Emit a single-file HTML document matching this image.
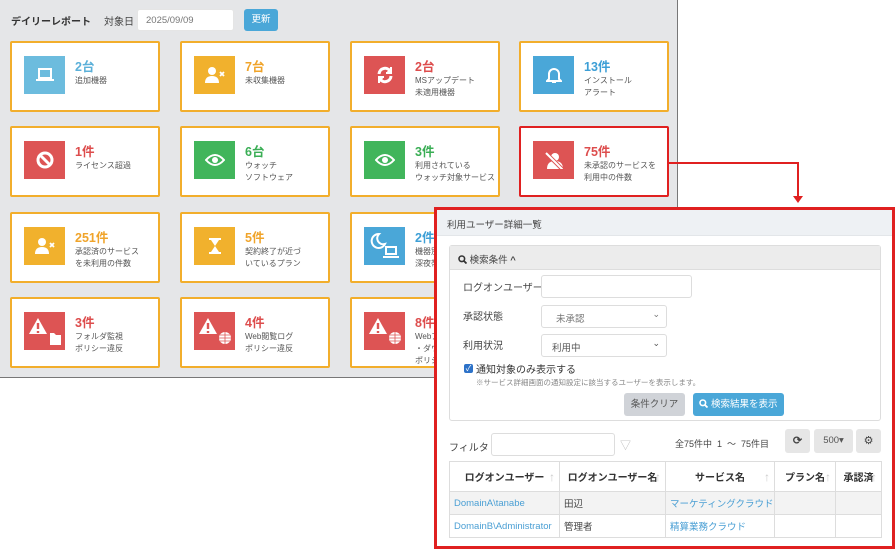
<!DOCTYPE html>
<html><head><meta charset="utf-8"><style>
*{box-sizing:border-box;margin:0;padding:0}
body{width:895px;height:549px;background:#fff;position:relative;overflow:hidden;font-family:"Liberation Sans","Noto Sans CJK JP",sans-serif;color:#444}
.a{position:absolute}
#dash{left:0;top:0;width:678px;height:378px;background:#e5e6e8;border-right:1px solid #777;border-bottom:1px solid #777}
.card{position:absolute;width:150px;height:71px;background:#fff;border:2px solid #f2ae2c;border-radius:2px}
.ic{position:absolute;left:12px;top:13px;width:41px;height:38px;display:flex;align-items:center;justify-content:center}
.num{position:absolute;left:63px;top:13px;font-size:12.5px;font-weight:bold}
.lb{position:absolute;left:63px;top:32px;font-size:8px;line-height:12px;color:#555}
.bl{background:#6cbcde}.or{background:#f1b12d}.rd{background:#dd5454}.gr{background:#41b55b}.db{background:#4aa7d8}
.cb{color:#5bb0d9}.co{color:#f0a42a}.cr{color:#dd4d4d}.cg{color:#3aae55}
.inp{border:1px solid #ccc;border-radius:3px;background:#fff}
th{font-size:10px;font-weight:bold;color:#333;border:1px solid #ddd;height:30px;text-align:center;position:relative}
td{font-size:9.5px;border:1px solid #ddd;height:23px;padding-left:4px}
.lk{color:#4a9fd4}
.arr{position:absolute;right:4px;top:8px;color:#ccc;font-weight:normal;font-size:12px}
</style></head><body>
<div id="dash" class="a">
<div class="a" style="left:11px;top:13px;font-size:10px;font-weight:bold;color:#333">デイリーレポート</div>
<div class="a" style="left:104px;top:13px;font-size:10px;color:#444">対象日</div>
<div class="a inp" style="left:137px;top:9px;width:97px;height:22px;border-color:#e5e5e5;font-size:9.5px;color:#777;padding:5px 8px">2025/09/09</div>
<div class="a" style="left:244px;top:9px;width:34px;height:22px;background:#4aa7d8;border-radius:3px;color:#fff;font-size:9.5px;text-align:center;line-height:22px">更新</div>

<div class="card" style="left:10px;top:41px"><div class="ic bl"><svg width="18" height="14"><rect x="3" y="1" width="12" height="9" fill="none" stroke="#fff" stroke-width="2"/><rect x="0" y="11" width="18" height="2" fill="#fff"/></svg></div><div class="num cb">2台</div><div class="lb">追加機器</div></div>
<div class="card" style="left:180px;top:41px"><div class="ic or"><svg width="22" height="16"><circle cx="8" cy="4" r="4" fill="#fff"/><path d="M1 16 Q1 9 8 9 Q15 9 15 16Z" fill="#fff"/><path d="M16 5l4 4M20 5l-4 4" stroke="#fff" stroke-width="1.8"/></svg></div><div class="num co">7台</div><div class="lb">未収集機器</div></div>
<div class="card" style="left:350px;top:41px"><div class="ic rd"><svg width="18" height="18" fill="none" stroke="#fff" stroke-width="3"><path d="M3 8 A6 6 0 0 1 14 5"/><path d="M15 10 A6 6 0 0 1 4 13"/><path d="M15 1v6h-5M3 17v-6h5" stroke-width="2" fill="#fff"/></svg></div><div class="num cr">2台</div><div class="lb">MSアップデート<br>未適用機器</div></div>
<div class="card" style="left:519px;top:41px"><div class="ic db"><svg width="16" height="18" fill="none" stroke="#fff" stroke-width="2"><path d="M3 13V8a5 5 0 0 1 10 0v5l2 2H1z"/><path d="M6 16h4"/></svg></div><div class="num cb" style="color:#3d9fd6">13件</div><div class="lb">インストール<br>アラート</div></div>

<div class="card" style="left:10px;top:126px"><div class="ic rd"><svg width="18" height="18" fill="none" stroke="#fff" stroke-width="3"><circle cx="9" cy="9" r="7"/><path d="M4 4l10 10"/></svg></div><div class="num cr">1件</div><div class="lb">ライセンス超過</div></div>
<div class="card" style="left:180px;top:126px"><div class="ic gr"><svg width="20" height="14"><path d="M1 7Q10 -3 19 7Q10 17 1 7Z" fill="none" stroke="#fff" stroke-width="2"/><circle cx="10" cy="7" r="3" fill="#fff"/></svg></div><div class="num cg">6台</div><div class="lb">ウォッチ<br>ソフトウェア</div></div>
<div class="card" style="left:350px;top:126px"><div class="ic gr"><svg width="20" height="14"><path d="M1 7Q10 -3 19 7Q10 17 1 7Z" fill="none" stroke="#fff" stroke-width="2"/><circle cx="10" cy="7" r="3" fill="#fff"/></svg></div><div class="num cg">3件</div><div class="lb">利用されている<br>ウォッチ対象サービス</div></div>
<div class="card" style="left:519px;top:126px;border-color:#e02020"><div class="ic rd"><svg width="20" height="18"><circle cx="11" cy="6" r="4" fill="#fff"/><path d="M3 18Q3 10 11 10Q19 10 19 18Z" fill="#fff"/><path d="M2 2l16 16" stroke="#dd5454" stroke-width="4"/><path d="M2 2l16 16" stroke="#fff" stroke-width="2"/></svg></div><div class="num cr">75件</div><div class="lb">未承認のサービスを<br>利用中の件数</div></div>

<div class="card" style="left:10px;top:212px"><div class="ic or"><svg width="22" height="16"><circle cx="8" cy="4" r="4" fill="#fff"/><path d="M1 16 Q1 9 8 9 Q15 9 15 16Z" fill="#fff"/><path d="M16 5l4 4M20 5l-4 4" stroke="#fff" stroke-width="1.8"/></svg></div><div class="num co">251件</div><div class="lb">承認済のサービス<br>を未利用の件数</div></div>
<div class="card" style="left:180px;top:212px"><div class="ic or"><svg width="14" height="16"><path d="M1 1h12M1 15h12" stroke="#fff" stroke-width="2"/><path d="M3 2h8L7 8l4 6H3l4-6z" fill="#fff"/></svg></div><div class="num co">5件</div><div class="lb">契約終了が近づ<br>いているプラン</div></div>
<div class="card" style="left:350px;top:212px"><div class="ic db" style="width:41px;height:38px"><svg width="30" height="28" fill="none" stroke="#fff" stroke-width="2"><path d="M9 2A7 7 0 1 0 15 12A6 6 0 0 1 9 2Z"/><rect x="16" y="15" width="10" height="7"/><path d="M13 25h16"/></svg></div><div class="num cb" style="color:#3d9fd6">2件</div><div class="lb">機器別<br>深夜帯</div></div>

<div class="card" style="left:10px;top:297px"><div class="ic rd"><svg width="34" height="30"><path d="M10 2L1 18h18z" fill="#fff"/><path d="M10 7v6M10 15v2" stroke="#dd5454" stroke-width="2.4"/><path d="M22 17h4l2 2h5v10H22z" fill="#fff"/></svg></div><div class="num cr">3件</div><div class="lb">フォルダ監視<br>ポリシー違反</div></div>
<div class="card" style="left:180px;top:297px"><div class="ic rd"><svg width="34" height="30"><path d="M10 2L1 18h18z" fill="#fff"/><path d="M10 7v6M10 15v2" stroke="#dd5454" stroke-width="2.4"/><circle cx="27" cy="22" r="6" fill="#fff"/><path d="M21 22h12M27 16v12M22 19h10M22 25h10" stroke="#dd5454" stroke-width="0.8"/></svg></div><div class="num cr">4件</div><div class="lb">Web閲覧ログ<br>ポリシー違反</div></div>
<div class="card" style="left:350px;top:297px"><div class="ic rd"><svg width="34" height="30"><path d="M10 2L1 18h18z" fill="#fff"/><path d="M10 7v6M10 15v2" stroke="#dd5454" stroke-width="2.4"/><circle cx="27" cy="22" r="6" fill="#fff"/><path d="M21 22h12M27 16v12M22 19h10M22 25h10" stroke="#dd5454" stroke-width="0.8"/></svg></div><div class="num cr">8件</div><div class="lb">Webア<br>・ダウ<br>ポリシー</div></div>
</div>

<div class="a" style="left:668px;top:162px;width:131px;height:2px;background:#e02020"></div>
<div class="a" style="left:797px;top:162px;width:2px;height:35px;background:#e02020"></div>
<div class="a" style="left:793px;top:196px;width:0;height:0;border-left:5px solid transparent;border-right:5px solid transparent;border-top:7px solid #e02020"></div>

<div class="a" style="left:434px;top:207px;width:461px;height:342px;border:3px solid #e02020;background:#fff">
<div class="a" style="left:0;top:0;width:455px;height:26px;background:#eef1f4;border-bottom:1px solid #e3e6e9;font-size:9.5px;padding:7px 10px;color:#444">利用ユーザー詳細一覧</div>
<div class="a" style="left:12px;top:35px;width:432px;height:176px;border:1px solid #ddd;border-radius:3px">
<div style="height:24px;background:#ececec;border-bottom:1px solid #ddd;font-size:9.5px;padding:6px 8px;color:#444"><svg width="9" height="9" style="vertical-align:-1px"><circle cx="3.8" cy="3.8" r="2.8" fill="none" stroke="#333" stroke-width="1.6"/><path d="M6 6l2.5 2.5" stroke="#333" stroke-width="1.8"/></svg> 検索条件 <b>^</b></div>
</div>
<div class="a" style="left:26px;top:69px;font-size:10px">ログオンユーザー</div>
<div class="a inp" style="left:104px;top:65px;width:151px;height:23px;border-color:#ddd"></div>
<div class="a" style="left:26px;top:98px;font-size:10px">承認状態</div>
<div class="a inp" style="left:104px;top:95px;width:126px;height:23px;border-color:#ddd;font-size:9.5px;color:#777;padding:5px 14px">未承認<span style="position:absolute;right:6px;top:3px;font-size:9px">⌄</span></div>
<div class="a" style="left:26px;top:127px;font-size:10px">利用状況</div>
<div class="a inp" style="left:104px;top:124px;width:126px;height:23px;border-color:#ddd;font-size:9.5px;color:#555;padding:5px 10px">利用中<span style="position:absolute;right:6px;top:3px;font-size:9px">⌄</span></div>
<div class="a" style="left:27px;top:154px;width:9px;height:9px;background:#2d72c8;border-radius:2px;color:#fff;font-size:8px;line-height:9px;text-align:center">✓</div>
<div class="a" style="left:39px;top:151px;font-size:10px;color:#333">通知対象のみ表示する</div>
<div class="a" style="left:39px;top:167px;font-size:7.5px;color:#888">※サービス詳細画面の通知設定に該当するユーザーを表示します。</div>
<div class="a" style="left:187px;top:183px;width:61px;height:23px;background:#d0d3d8;border-radius:3px;font-size:9.5px;color:#555;text-align:center;line-height:23px">条件クリア</div>
<div class="a" style="left:256px;top:183px;width:91px;height:23px;background:#4aa7d8;border-radius:3px;font-size:9.5px;color:#fff;text-align:center;line-height:23px"><svg width="9" height="9" style="vertical-align:-1px"><circle cx="3.8" cy="3.8" r="2.8" fill="none" stroke="#fff" stroke-width="1.6"/><path d="M6 6l2.5 2.5" stroke="#fff" stroke-width="1.8"/></svg> 検索結果を表示</div>
<div class="a" style="left:12px;top:229px;font-size:10px">フィルタ</div>
<div class="a inp" style="left:54px;top:223px;width:124px;height:23px;border-color:#ddd"></div>
<div class="a" style="left:183px;top:227px;font-size:11px;color:#bbb">▽</div>
<div class="a" style="left:238px;top:227px;font-size:9px;color:#444">全75件中 &nbsp;1 &nbsp;～ &nbsp;75件目</div>
<div class="a" style="left:348px;top:219px;width:25px;height:24px;background:#e6e6e6;border-radius:3px;font-size:11px;text-align:center;line-height:24px;color:#444;font-weight:bold">⟳</div>
<div class="a" style="left:377px;top:219px;width:39px;height:24px;background:#e6e6e6;border-radius:3px;font-size:9.5px;text-align:center;line-height:24px;color:#555">500▾</div>
<div class="a" style="left:419px;top:219px;width:25px;height:24px;background:#e6e6e6;border-radius:3px;font-size:11px;text-align:center;line-height:24px;color:#444">⚙</div>
<table class="a" style="left:12px;top:251px;width:433px;border-collapse:collapse">
<tr><th style="width:110px">ログオンユーザー<span class="arr">↑</span></th><th style="width:106px">ログオンユーザー名<span class="arr">↑</span></th><th style="width:109px">サービス名<span class="arr">↑</span></th><th style="width:61px">プラン名<span class="arr">↑</span></th><th>承認済<span class="arr">↑</span></th></tr>
<tr style="background:#f3f3f3"><td class="lk">DomainA\tanabe</td><td>田辺</td><td class="lk">マーケティングクラウド</td><td></td><td></td></tr>
<tr><td class="lk">DomainB\Administrator</td><td>管理者</td><td class="lk">精算業務クラウド</td><td></td><td></td></tr>
</table>
</div>
</body></html>
